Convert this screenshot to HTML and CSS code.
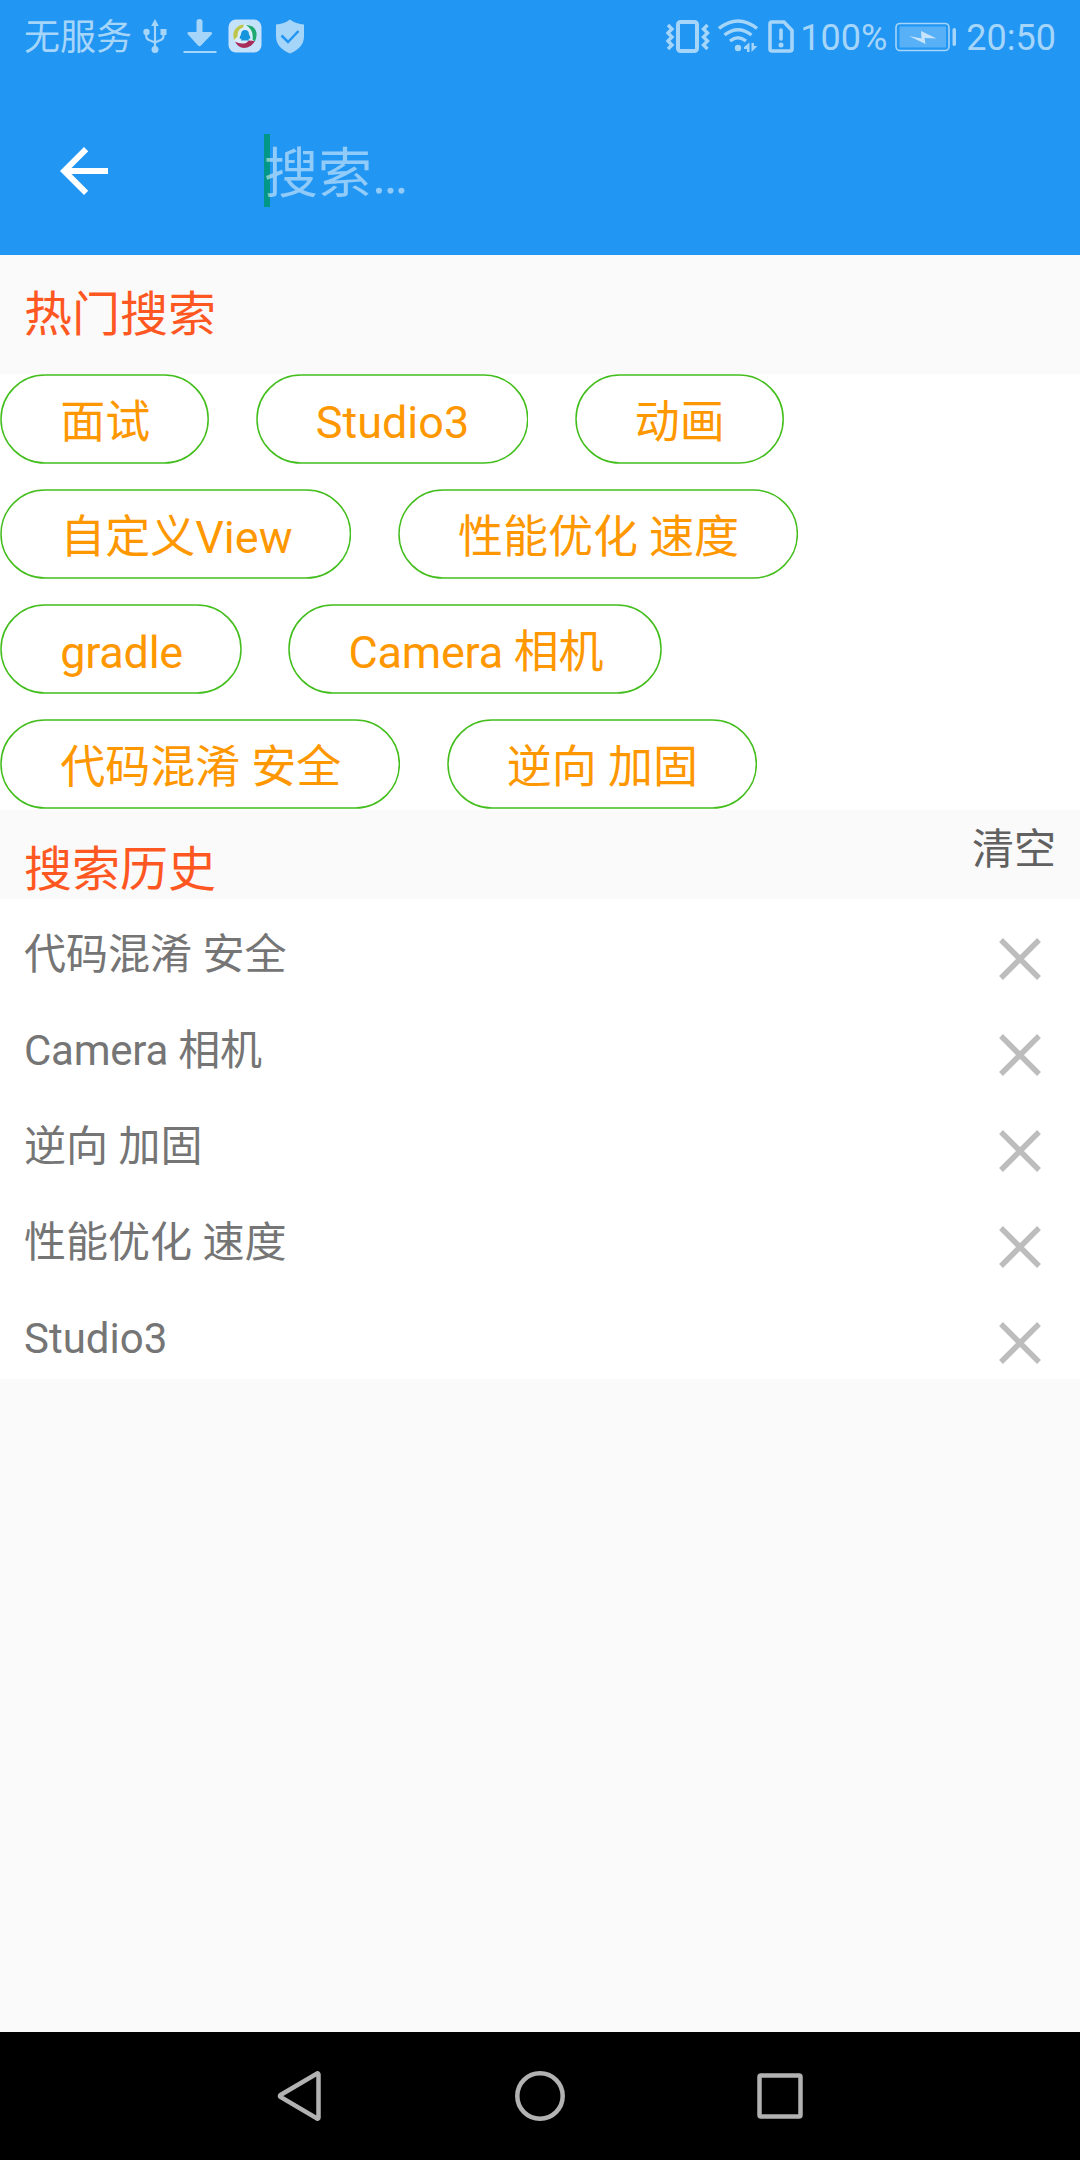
FILE: index.html
```html
<!DOCTYPE html>
<html lang="zh-CN">
<head>
<meta charset="utf-8">
<title>搜索</title>
<link rel="stylesheet" href="styles.css">
</head>
<body>
<div class="screen">
  <header class="top">
    <div class="status">
      <div class="status-left">
        <span class="carrier">无服务</span>
        <svg class="icon-usb" width="24" height="36" viewBox="0 0 24 36" fill="none" stroke="currentColor" stroke-width="2.200">
          <path d="M12 6v24M3.200 14v3.500q0 4 4 5l4.800 2M20.500 14v3.500q0 4-4 5L12 24.500"/>
          <path d="M12 1l3.800 7H8.200z" fill="currentColor" stroke="none"/>
          <circle cx="12" cy="31.500" r="3.500" fill="currentColor" stroke="none"/>
          <circle cx="3.500" cy="14" r="3.200" fill="currentColor" stroke="none"/>
          <path d="M17.500 11h6v6h-6z" fill="currentColor" stroke="none"/>
        </svg>
        <svg class="icon-download" width="34" height="36" viewBox="0 0 34 36" fill="currentColor">
          <path d="M13.500 3.500Q13.500 1 16.500 1t3 2.500V14h7.500q3.500 0 1.500 2.500L18 27.500q-1.500 1.500-3 0L5 16.500Q3 14 6.500 14h7zM.500 33h33v2H.500z"/>
        </svg>
        <svg class="icon-app" width="34" height="34" viewBox="0 0 34 34" fill="none">
          <rect x=".5" y=".5" width="33" height="33" rx="7.500" fill="#c5e2fb"/>
          <circle cx="17" cy="17" r="11.500" fill="#d9edfc"/>
          <path d="M6 21Q3 10 13 6l3-.500-1 3q-6 2-5.500 9z" fill="#bdc64a"/>
          <path d="M18 6q9 0 10.500 8 .5 4-1.500 8.500l-2.500-2Q26 11 18 6z" fill="#1fa971"/>
          <path d="M7 22.500q5 3 11 1.500l3-2.500 6 .5q-4 7-11 7-6 0-9-6.500z" fill="#a82d5b"/>
          <path d="M17 11q4 0 4 4.500 2 3 1 4.500l-1.500-.5.500 2h-8l.5-2-1.500.5q-1-1.500 1-4.500 0-4.500 4-4.500z" fill="#1695dc"/>
        </svg>
        <svg class="icon-shield" width="30" height="36" viewBox="0 0 30 36">
          <path d="M15 1.500Q21 6 29 6.500V18q0 12-14 17.500Q1 30 1 18V6.500Q9 6 15 1.500z" fill="currentColor"/>
          <path d="M6.500 17.500l6.500 6.500 10.500-11" fill="none" stroke="#2196f3" stroke-width="2.500"/>
        </svg>
      </div>
      <div class="status-right">
        <svg class="icon-vibrate" width="44" height="36" viewBox="0 0 44 36" fill="none" stroke="currentColor">
          <rect x="12" y="4" width="19" height="29" rx="2.500" stroke-width="4"/>
          <path d="M2 7l4 4-4 4 4 4-4 4 4 4-4 4M41.500 7l-4 4 4 4-4 4 4 4-4 4 4 4" stroke-width="3.400"/>
        </svg>
        <svg class="icon-wifi" width="40" height="36" viewBox="0 0 40 36" fill="none" stroke="currentColor" stroke-width="3.400">
          <path d="M1 10.500q19-15 38 0M6.500 17q13.500-10.500 27 0M12 23q8-6.500 16 0"/>
          <circle cx="20" cy="30" r="3.200" fill="currentColor" stroke="none"/>
          <path d="M31.500 24.500v9.500h-2.500v-3h-3v-2zM33.500 34v-9h2.500v3h3.500z" fill="currentColor" stroke="none"/>
        </svg>
        <svg class="icon-sim" width="26" height="36" viewBox="0 0 26 36" fill="none" stroke="currentColor" stroke-width="3.600">
          <path d="M3.500 3H16l8 8.500V30q0 2-2 2H4q-2 0-2-2V5q0-2 1.500-2z"/>
          <path d="M13 11v9" stroke-linecap="round"/>
          <circle cx="13" cy="26" r="2.500" fill="currentColor" stroke="none"/>
        </svg>
        <span class="percent">100%</span>
        <svg class="icon-battery" width="62" height="30" viewBox="0 0 62 30">
          <rect x="1" y="1.500" width="53" height="27" rx="4" fill="none" stroke="currentColor" stroke-width="1.600"/>
          <rect x="4.500" y="4.500" width="46.500" height="21" fill="#fff" fill-opacity=".25"/>
          <path d="M14 14l12.500 2.500L26 9l15.500 7.500-12-.5 1 6z" fill="#c8e4fc"/>
          <rect x="57.500" y="6" width="3.500" height="18" rx="1.700" fill="currentColor"/>
        </svg>
        <span class="clock">20:50</span>
      </div>
    </div>
    <div class="toolbar">
      <svg class="back" width="72" height="72" viewBox="0 0 24 24"><path d="M20 11H7.830l5.590-5.590L12 4l-8 8 8 8 1.410-1.410L7.830 13H20v-2z" fill="#fff"/></svg>
      <div class="field"><span class="caret"></span><span class="hint">搜索…</span></div>
    </div>
  </header>

  <div class="hot-head"><h2 class="title">热门搜索</h2></div>
  <div class="tags">
    <div class="tag-row">
      <div class="tag"><svg class="outline"><rect class="outline-rect"/></svg>面试</div>
      <div class="tag"><svg class="outline"><rect class="outline-rect"/></svg>Studio3</div>
      <div class="tag"><svg class="outline"><rect class="outline-rect"/></svg>动画</div>
    </div>
    <div class="tag-row">
      <div class="tag"><svg class="outline"><rect class="outline-rect"/></svg>自定义View</div>
      <div class="tag"><svg class="outline"><rect class="outline-rect"/></svg>性能优化 速度</div>
    </div>
    <div class="tag-row">
      <div class="tag tight"><svg class="outline"><rect class="outline-rect"/></svg>gradle</div>
      <div class="tag tight"><svg class="outline"><rect class="outline-rect"/></svg>Camera 相机</div>
    </div>
    <div class="tag-row">
      <div class="tag"><svg class="outline"><rect class="outline-rect"/></svg>代码混淆 安全</div>
      <div class="tag"><svg class="outline"><rect class="outline-rect"/></svg>逆向 加固</div>
    </div>
  </div>

  <div class="history-head">
    <h2 class="title">搜索历史</h2>
    <span class="clear">清空</span>
  </div>
  <ul class="history">
    <li class="item"><span class="word">代码混淆 安全</span><svg class="remove" viewBox="0 0 42 42"><path d="M2 2l38 38M40 2L2 40"/></svg></li>
    <li class="item"><span class="word tight">Camera 相机</span><svg class="remove" viewBox="0 0 42 42"><path d="M2 2l38 38M40 2L2 40"/></svg></li>
    <li class="item"><span class="word">逆向 加固</span><svg class="remove" viewBox="0 0 42 42"><path d="M2 2l38 38M40 2L2 40"/></svg></li>
    <li class="item"><span class="word">性能优化 速度</span><svg class="remove" viewBox="0 0 42 42"><path d="M2 2l38 38M40 2L2 40"/></svg></li>
    <li class="item"><span class="word">Studio3</span><svg class="remove" viewBox="0 0 42 42"><path d="M2 2l38 38M40 2L2 40"/></svg></li>
  </ul>

  <nav class="navbar">
    <svg class="key" viewBox="0 0 60 60"><path d="M10.500 29L47 7.500q1.500-.5 1.500 1v43q0 1.500-1.500 1L10.500 31q-1.200-1 0-2z"/></svg>
    <svg class="key" viewBox="0 0 60 60"><circle cx="30" cy="30" r="22.700"/></svg>
    <svg class="key" viewBox="0 0 60 60"><rect x="9.500" y="9.500" width="41" height="41" rx="1.500"/></svg>
  </nav>
</div>
</body>
</html>
```
FILE: styles.css
```css
* { box-sizing: border-box; margin: 0; padding: 0; }

body {
  width: 1080px;
  background: #fafafa;
  font-family: Roboto, "Noto Sans CJK SC", sans-serif;
}

svg { display: block; flex: none; }

.screen {
  display: flex;
  flex-direction: column;
  height: 2160px;
  background: #fafafa;
}

.top { height: 255px; background: #2196f3; }

.status {
  display: flex;
  justify-content: space-between;
  height: 72px;
  padding: 0 24px;
  color: #a6d5fa;
  font-size: 36px;
  line-height: 76px;
}

.status-left, .status-right { display: flex; align-items: flex-start; }
.icon-usb { margin: 18px 0 0 11px; }
.icon-download { margin: 18px 0 0 16px; }
.icon-app { margin: 19px 0 0 11px; }
.icon-shield { margin: 18px 0 0 13px; }
.icon-vibrate { margin-top: 18px; }
.icon-wifi { margin: 18px 0 0 8px; }
.icon-sim { margin: 19px 0 0 10px; }
.percent { margin-left: 6px; }
.icon-battery { margin: 22px 0 0 8px; }
.clock { margin-left: 9px; }

.toolbar {
  display: flex;
  align-items: flex-start;
  padding: 62px 48px 0;
}

.back { margin-top: 1px; }

.field {
  display: flex;
  height: 73px;
  margin-left: 144px;
  font-size: 54px;
  line-height: 82px;
}

.caret { width: 6px; height: 73px; background: #009688; }
.hint { margin-left: -6px; color: rgba(255, 255, 255, .5); position: relative; }

.title {
  color: #ff5722;
  font-size: 48px;
  font-weight: 400;
  line-height: 60px;
}

.hot-head { height: 119px; padding: 30px 24px 0; }

.tags {
  display: flex;
  flex-direction: column;
  gap: 25px;
  height: 436px;
  background: #fff;
}

.tag-row { display: flex; gap: 46.3px; }

.tag {
  position: relative;
  height: 90px;
  padding: 0 59px 0 60.2px;
  color: #ff9800;
  font-size: 45px;
  line-height: 97px;
  white-space: nowrap;
}

.tight { letter-spacing: -.25px; }

.outline { position: absolute; inset: 0; width: 100%; height: 100%; }

.outline-rect {
  x: 1px;
  y: 1px;
  width: calc(100% - 2px);
  height: 88px;
  rx: 44px;
  fill: none;
  stroke: #43be1d;
  stroke-width: 1.500px;
}

.history-head {
  display: flex;
  justify-content: space-between;
  height: 89px;
  padding: 0 24px;
}

.history-head .title { margin-top: 30px; }
.clear { margin-top: 10px; color: #616161; font-size: 42px; line-height: 60px; }

.history { list-style: none; background: #fff; }

.item {
  display: flex;
  justify-content: space-between;
  height: 96px;
  padding: 0 39px 0 24px;
}

.word { margin-top: 26px; color: #757575; font-size: 42px; line-height: 60px; }

.remove {
  width: 42px;
  height: 42px;
  margin-top: 39px;
  fill: none;
  stroke: #bdbdbd;
  stroke-width: 5.500px;
}

.navbar {
  display: flex;
  justify-content: center;
  align-items: flex-start;
  gap: 180px;
  height: 128px;
  margin-top: auto;
  padding-top: 34px;
  background: #000;
}

.key {
  width: 60px;
  height: 60px;
  fill: none;
  stroke: #b2b2b2;
  stroke-width: 4.500px;
}
```
